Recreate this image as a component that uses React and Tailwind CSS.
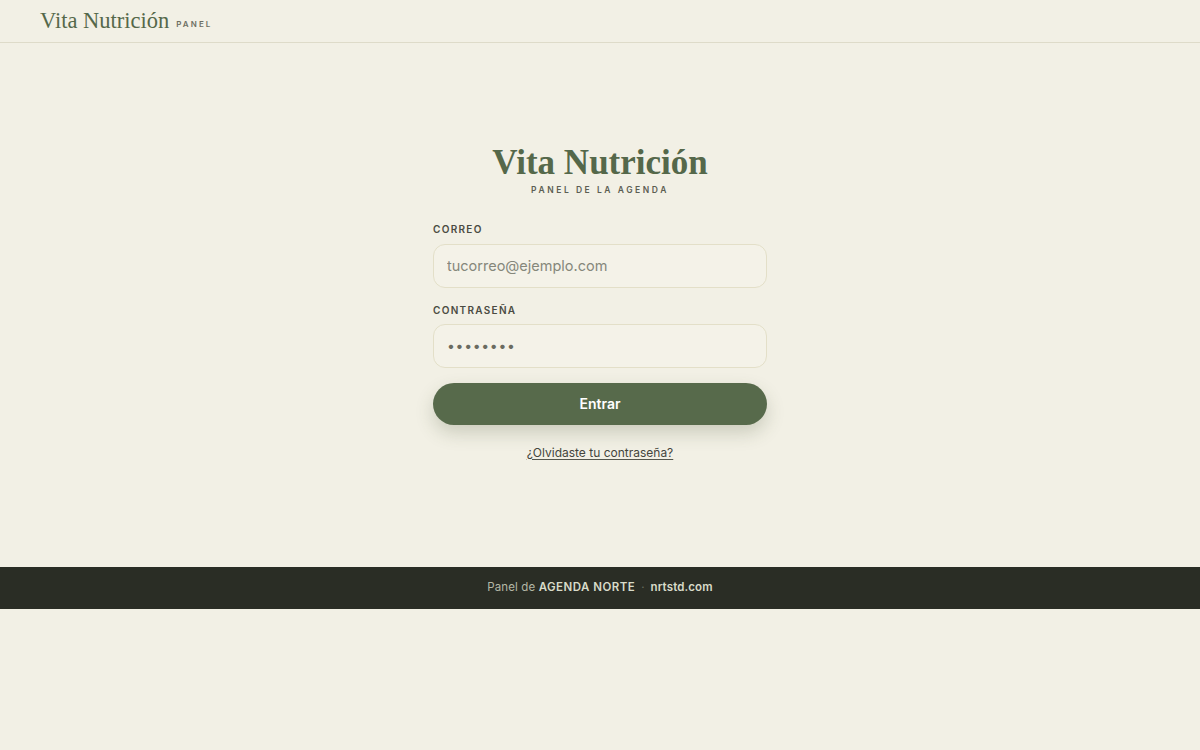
import React from "react";

export default function App() {
    const serif = { fontFamily: "'Liberation Serif', 'DejaVu Serif', serif" };

    return (
        <div className="min-h-[750px] bg-[#f2f0e5] text-[#3d3f36]" style={{ fontFamily: "Inter, 'Liberation Sans', sans-serif" }}>
            {/* top bar */}
            <header className="h-[43px] border-b border-[#dedbc9] flex items-center px-10">
                <span className="text-[22.5px] text-[#55684a] leading-none" style={serif}>Vita Nutrición</span>
                <span className="ml-[7px] mt-[6px] text-[8px] font-semibold tracking-[0.26em] text-[#6d6e62]">PANEL</span>
            </header>

            <main className="h-[524px] flex justify-center pt-[102px]">
                <div className="w-[334px]">
                    <div className="flex flex-col items-center">
                        <h1 className="text-[35px] font-bold leading-none text-[#55684a]" style={serif}>Vita Nutrición</h1>
                        <p className="mt-[4px] text-[8.5px] font-semibold tracking-[0.3em] text-[#5c5e53]">PANEL DE LA AGENDA</p>
                    </div>

                    <form className="mt-[25px]" onSubmit={(e) => e.preventDefault()}>
                        <label className="block text-[10px] font-semibold tracking-[0.13em] text-[#4a4b42]">CORREO</label>
                        <input
                            type="email"
                            placeholder="tucorreo@ejemplo.com"
                            className="mt-[7px] w-full h-[44px] rounded-xl border border-[#e3dfc8] bg-[#f4f2e8] px-[13px] text-[14.5px] text-[#3d3f36] placeholder:text-[#85877b] outline-none"
                        />

                        <label className="block mt-[15px] text-[10px] font-semibold tracking-[0.13em] text-[#4a4b42]">CONTRASEÑA</label>
                        <input
                            type="password"
                            defaultValue="12345678"
                            className="mt-[6px] w-full h-[44px] rounded-xl border border-[#e3dfc8] bg-[#f4f2e8] px-[13px] text-[14px] tracking-[0.05em] text-[#6a6b60] outline-none"
                        />

                        <button
                            type="submit"
                            className="mt-[15px] w-full h-[42px] rounded-full bg-[#576a4b] text-white text-[14px] font-semibold shadow-[0_8px_18px_rgba(70,80,50,0.22)]"
                        >
                            Entrar
                        </button>

                        <div className="mt-[14px] text-center">
                            <a href="#" className="text-[12px] text-[#44463d] underline underline-offset-2 decoration-[#55574d]">¿Olvidaste tu contraseña?</a>
                        </div>
                    </form>
                </div>
            </main>

            <footer className="h-[42px] bg-[#2a2d25] flex items-center justify-center text-[11.5px] tracking-[0.01em] text-[#b4b7a6]">
                <span>Panel de <span className="font-semibold text-[#d8dbc9] tracking-[0.04em]">AGENDA NORTE</span></span>
                <span className="mx-[6px] text-[#6b6e60]">·</span>
                <span className="font-semibold text-[#d8dbc9]">nrtstd.com</span>
            </footer>
        </div>
    );
}
